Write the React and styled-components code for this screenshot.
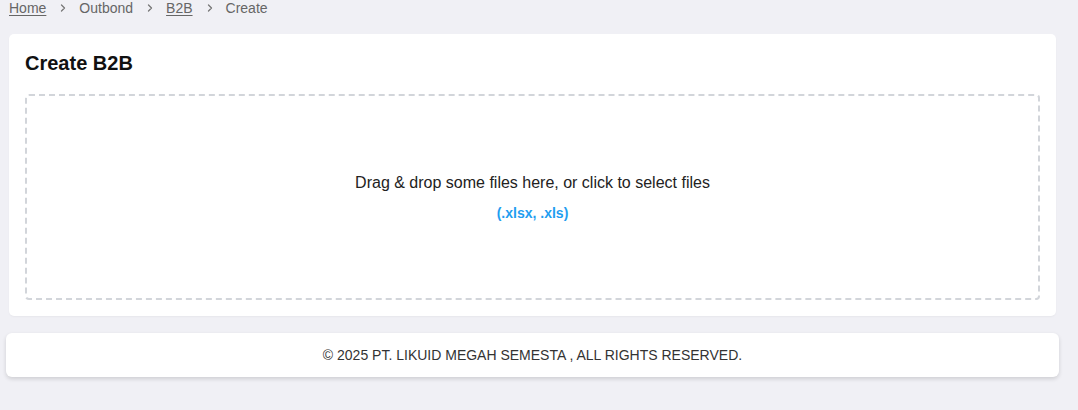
import React from 'react'
import styled, { createGlobalStyle } from 'styled-components'

const Global = createGlobalStyle`
  body {
    margin: 0;
    background: #f0f0f5;
    font-family: "Liberation Sans", Arial, sans-serif;
  }
`

const crumbs = [
  { label: 'Home', link: true },
  { label: 'Outbond', link: false },
  { label: 'B2B', link: true },
  { label: 'Create', link: false },
]

const Chevron = () => (
  <svg width="8" height="10" viewBox="0 0 8 10" fill="none">
    <path d="M2.5 2 L5.5 5 L2.5 8" stroke="#777" strokeWidth="1.3" strokeLinecap="round" strokeLinejoin="round" />
  </svg>
)

const App = () => {
  return (
    <>
      <Global />
      <Page>
        <Main>
          <Breadcrumb>
            {crumbs.map((c, i) => (
              <React.Fragment key={c.label}>
                {i > 0 && <Sep><Chevron /></Sep>}
                <Crumb $link={c.link}>{c.label}</Crumb>
              </React.Fragment>
            ))}
          </Breadcrumb>
          <Card>
            <Title>Create B2B</Title>
            <Dropzone>
              <DropText>Drag &amp; drop some files here, or click to select files</DropText>
              <Accept>(.xlsx, .xls)</Accept>
            </Dropzone>
          </Card>
        </Main>
        <Footer>© 2025 PT. LIKUID MEGAH SEMESTA , ALL RIGHTS RESERVED.</Footer>
      </Page>
    </>
  )
}

export default App

const Page = styled.div`
  padding: 0 19px 30px 6px;
`
const Main = styled.div`
  margin: 0 3px;
`
const Breadcrumb = styled.div`
  display: flex;
  align-items: center;
  height: 16px;
  font-size: 14px;
  line-height: 14px;
`
const Crumb = styled.span`
  color: #666;
  text-decoration: ${(p) => (p.$link ? 'underline' : 'none')};
  text-underline-offset: 2px;
  cursor: ${(p) => (p.$link ? 'pointer' : 'default')};
`
const Sep = styled.span`
  display: flex;
  align-items: center;
  margin: 0 12px 0 13px;
`
const Card = styled.div`
  margin-top: 18px;
  background: #fff;
  border-radius: 5px;
  padding: 17px 16px 16px;
  box-shadow: 0 1px 2px rgba(0, 0, 0, 0.04);
`
const Title = styled.h2`
  margin: 0 0 19px;
  font-size: 20px;
  line-height: 24px;
  font-weight: 700;
  color: #111;
`
const Dropzone = styled.div`
  height: 206px;
  box-sizing: border-box;
  border: 2px dashed #d2d5da;
  border-radius: 4px;
  display: flex;
  flex-direction: column;
  align-items: center;
  justify-content: center;
  gap: 8px;
  cursor: pointer;
`
const DropText = styled.p`
  margin: 0;
  font-size: 16px;
  line-height: 24px;
  color: #222;
`
const Accept = styled.p`
  margin: 0;
  font-size: 14px;
  line-height: 20px;
  font-weight: 700;
  color: #1f9ef0;
`
const Footer = styled.footer`
  margin-top: 17px;
  height: 44px;
  background: #fff;
  border-radius: 6px;
  box-shadow: 0 2px 4px rgba(0, 0, 0, 0.14);
  display: flex;
  align-items: center;
  justify-content: center;
  font-size: 14px;
  color: #333;
`
